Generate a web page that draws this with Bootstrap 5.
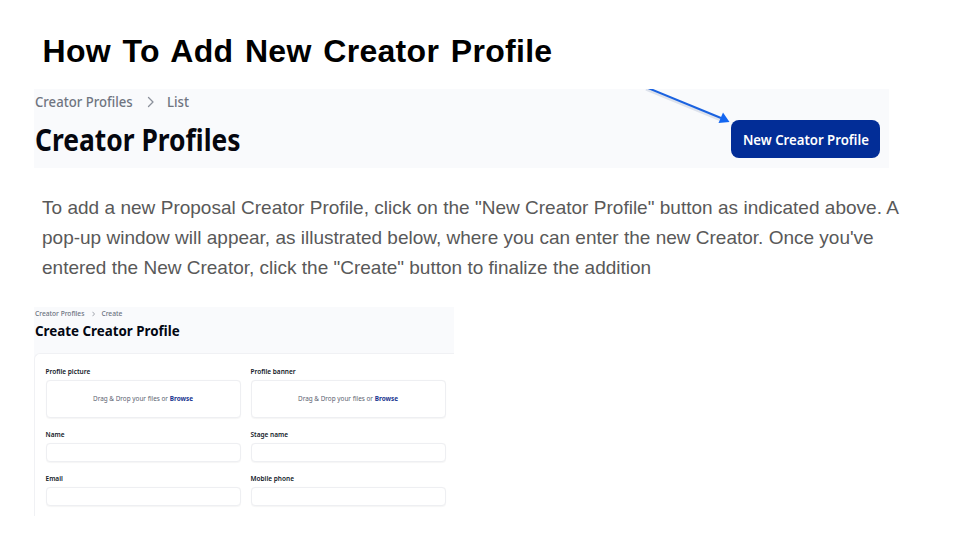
<!DOCTYPE html>
<html lang="en">
<head>
<meta charset="utf-8">
<meta name="viewport" content="width=device-width, initial-scale=1">
<title>How To Add New Creator Profile</title>
<link href="https://cdn.jsdelivr.net/npm/bootstrap@5.3.0/dist/css/bootstrap.min.css" rel="stylesheet">
<style>
  body { width: 960px; height: 540px; font-family: "Liberation Sans", Arial, sans-serif; }
  .slide { padding: 32px 0 0 34px; height: 540px; }
  .slide-title { font-size: 32px; line-height: 39px; font-weight: 700; letter-spacing: .3px; word-spacing: 2.4px; color: #000; margin: 0 0 18px 8.5px; }
  .app { font-family: "Noto Sans", sans-serif; background: #f9fafc; }
  .list-header { width: 855px; height: 79px; padding: 0 9px 0 1px; }
  .squeeze { display: inline-block; transform-origin: 0 50%; white-space: nowrap; }
  .crumbs { font-size: 14px; line-height: 20px; font-weight: 500; color: #6f7480; padding-top: 3px; }
  .crumbs .squeeze { transform: scaleX(.937); }
  .crumbs .first { width: 112px; }
  .crumbs .sep { width: 8px; height: 12px; margin-right: 12px; }
  .list-title { font-size: 30px; line-height: 36px; font-weight: 700; color: #05070f; margin: 10px 0 0; }
  .list-title .squeeze { transform: scaleX(.88); }
  .btn-create { width: 149px; height: 38px; margin-top: 31px; padding: 0; border: 0; border-radius: 8px; background: #022d97; font-size: 14px; font-weight: 600; line-height: 37px; }
  .btn-create:hover { background: #03258a; }
  .btn-create .squeeze { transform: scaleX(.942); transform-origin: 50% 50%; }
  .pointer { top: 0; left: 608px; }
  .copy { font-size: 19px; line-height: 30px; color: #595959; margin: 25px 0 24px 8px; }
  .copy span { display: block; white-space: nowrap; }
  .copy span:first-child { word-spacing: .1px; }
  .form-shot { width: 420px; height: 209px; overflow: hidden; }
  .small-crumbs { font-size: 6.65px; line-height: 10px; font-weight: 500; color: #6b7280; padding: 2px 0 0 1px; }
  .small-crumbs svg { margin: 0 6px 0 8px; }
  .form-title { font-size: 13.35px; line-height: 18px; font-weight: 700; color: #030712; margin: 3px 0 13px 1px; }
  .panel { height: 200px; border: 1px solid #f0f1f4; border-right: 0; border-radius: 6px 0 0 0; background: #fff; padding: 13px 9px 0 11px; }
  .fields { display: grid; grid-template-columns: 195px 195px; column-gap: 10px; margin-left: -.5px; }
  .fields label { display: block; font-size: 6.5px; line-height: 9px; font-weight: 600; color: #111827; margin-bottom: 4px; }
  .box { border: 1px solid #eeeff2; border-radius: 4px; background: #fff; box-shadow: 0 .5px 1px rgba(0,0,0,.04); }
  .drop { height: 38px; font-size: 6.4px; line-height: 10px; color: #5b6270; margin-bottom: 12px; }
  .drop a { color: #17348f; font-weight: 700; text-decoration: none; }
  .entry { display: block; width: 100%; height: 19px; padding: 0 4px; font-size: 7px; margin-bottom: 12px; outline: 0; }
</style>
</head>
<body class="bg-white overflow-hidden">
<main class="slide d-flex flex-column align-items-start">
  <h1 class="slide-title">How To Add New Creator Profile</h1>

  <section class="app list-header position-relative d-flex justify-content-between">
    <div>
      <div class="crumbs d-flex align-items-center">
        <span class="first"><span class="squeeze">Creator Profiles</span></span>
        <svg class="sep" viewBox="0 0 8 12" fill="none" stroke="#8b909b" stroke-width="1.3" stroke-linecap="round" stroke-linejoin="round"><path d="M1.500 1.500 6 6 1.500 10.500"/></svg>
        <span class="squeeze">List</span>
      </div>
      <h2 class="list-title"><span class="squeeze">Creator Profiles</span></h2>
    </div>
    <button class="btn btn-primary btn-create" type="button"><span class="squeeze">New Creator Profile</span></button>
    <svg class="pointer position-absolute" width="90" height="40" viewBox="0 0 90 40">
      <path d="M4 0 78 30.500" stroke="#7a8db8" stroke-opacity=".22" stroke-width="3"/>
      <path d="M6 -1 79 29" stroke="#1a62e0" stroke-width="2"/>
      <path d="M81 23.500 87.500 33 76.500 34z" fill="#1466f0"/>
    </svg>
  </section>

  <p class="copy"><span>To add a new Proposal Creator Profile, click on the "New Creator Profile" button as indicated above. A</span> <span>pop-up window will appear, as illustrated below, where you can enter the new Creator. Once you've</span> <span>entered the New Creator, click the "Create" button to finalize the addition</span></p>

  <section class="app form-shot">
    <div class="small-crumbs d-flex align-items-center">
      <span>Creator Profiles</span>
      <svg width="3" height="6" viewBox="0 0 3 6" fill="none" stroke="#8b909b" stroke-width=".8"><path d="M.5 .8 2.500 3 .5 5.200"/></svg>
      <span>Create</span>
    </div>
    <h2 class="form-title">Create Creator Profile</h2>
    <form class="panel">
      <div class="fields">
        <div><label>Profile picture</label><div class="box drop d-flex align-items-center justify-content-center"><span>Drag &amp; Drop your files or <a href="#">Browse</a></span></div></div>
        <div><label>Profile banner</label><div class="box drop d-flex align-items-center justify-content-center"><span>Drag &amp; Drop your files or <a href="#">Browse</a></span></div></div>
        <div><label for="name">Name</label><input class="box entry" id="name" type="text"></div>
        <div><label for="stage">Stage name</label><input class="box entry" id="stage" type="text"></div>
        <div><label for="email">Email</label><input class="box entry" id="email" type="email"></div>
        <div><label for="phone">Mobile phone</label><input class="box entry" id="phone" type="tel"></div>
      </div>
    </form>
  </section>
</main>
</body>
</html>
